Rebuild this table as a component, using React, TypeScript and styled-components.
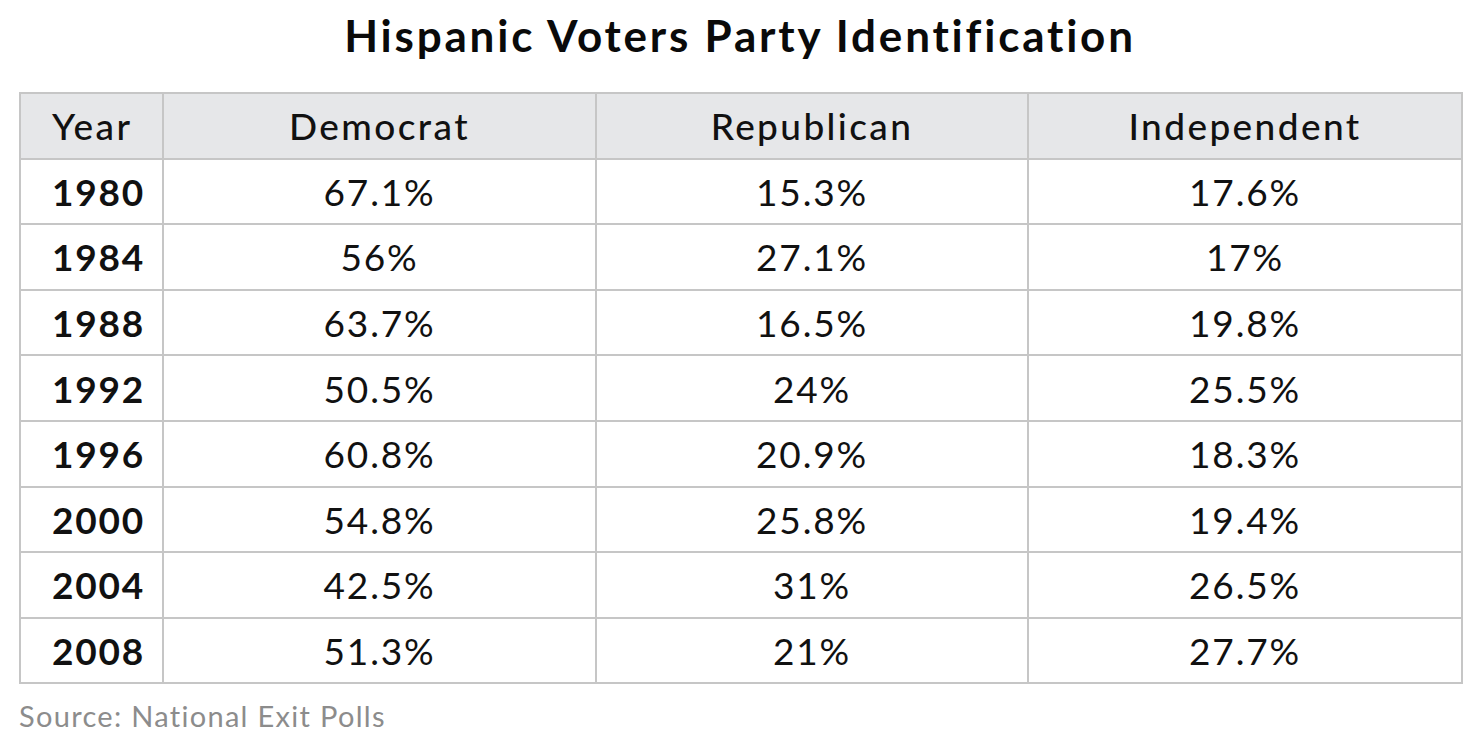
import React from "react";
import styled, { createGlobalStyle } from "styled-components";

const Global = createGlobalStyle`
  html, body { margin: 0; padding: 0; background: #ffffff; }
  body {
    font-family: Lato, "Noto Sans", sans-serif;
    color: #111;
    font-variant-ligatures: none;
  }
`;

const Page = styled.div`
  width: 1480px;
  height: 748px;
  display: flex;
  flex-direction: column;
  padding: 0 19px;
  box-sizing: border-box;
`;

const Title = styled.h1`
  margin: 0;
  padding-top: 8px;
  height: 92px;
  box-sizing: border-box;
  text-align: center;
  font-size: 44px;
  font-weight: 700;
  letter-spacing: 2.8px;
  line-height: 54px;
  color: #0a0a0a;
`;

const Table = styled.table`
  width: 1442px;
  border-collapse: collapse;
  table-layout: fixed;
`;

const Row = styled.tr`
  height: 65.6px;
`;

const Cell = styled.td<{ $head?: boolean; $year?: boolean }>`
  border: 2px solid #c6c6c6;
  padding: 0;
  background: ${(p) => (p.$head ? "#e6e7e9" : "#ffffff")};
  text-align: ${(p) => (p.$year ? "left" : "center")};
  padding-left: ${(p) => (p.$year ? "31px" : "0")};
  font-size: 37px;
  letter-spacing: ${(p) => (p.$head ? "2.4px" : "1.8px")};
  font-weight: ${(p) => (p.$year && !p.$head ? 700 : p.$head ? 500 : 400)};
  color: #111;
  vertical-align: middle;
  line-height: 1;
`;

const Source = styled.div`
  margin-top: 14px;
  font-size: 29px;
  letter-spacing: 1.3px;
  color: #8c8c8c;
`;

const data: [string, string, string, string][] = [
  ["1980", "67.1%", "15.3%", "17.6%"],
  ["1984", "56%", "27.1%", "17%"],
  ["1988", "63.7%", "16.5%", "19.8%"],
  ["1992", "50.5%", "24%", "25.5%"],
  ["1996", "60.8%", "20.9%", "18.3%"],
  ["2000", "54.8%", "25.8%", "19.4%"],
  ["2004", "42.5%", "31%", "26.5%"],
  ["2008", "51.3%", "21%", "27.7%"],
];

export default function App() {
  return (
    <>
      <Global />
      <Page>
        <Title>Hispanic Voters Party Identification</Title>
        <Table>
          <colgroup>
            <col style={{ width: 143 }} />
            <col style={{ width: 433 }} />
            <col style={{ width: 432 }} />
            <col style={{ width: 434 }} />
          </colgroup>
          <thead>
            <Row>
              <Cell as="th" $head $year>Year</Cell>
              <Cell as="th" $head>Democrat</Cell>
              <Cell as="th" $head>Republican</Cell>
              <Cell as="th" $head>Independent</Cell>
            </Row>
          </thead>
          <tbody>
            {data.map((r) => (
              <Row key={r[0]}>
                <Cell $year>{r[0]}</Cell>
                <Cell>{r[1]}</Cell>
                <Cell>{r[2]}</Cell>
                <Cell>{r[3]}</Cell>
              </Row>
            ))}
          </tbody>
        </Table>
        <Source>Source: National Exit Polls</Source>
      </Page>
    </>
  );
}
